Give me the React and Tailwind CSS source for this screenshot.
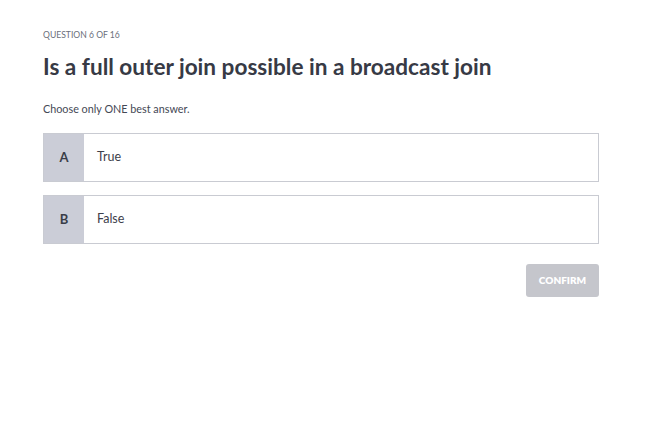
export default function App() {
  const opts = [
    ["A", "True"],
    ["B", "False"],
  ];
  return (
    <div className="w-[654px] h-[439px] bg-white" style={{ fontFamily: "Lato, 'Open Sans', sans-serif" }}>
      <div className="pl-[43px] pr-[55px] pt-[30px]">
        <div className="text-[8.6px] leading-[11px] text-[#6b6f7b] uppercase">Question 6 of 16</div>
        <h1 className="mt-[12px] text-[22.6px] leading-[28px] font-bold text-[#373a45]">Is a full outer join possible in a broadcast join</h1>
        <p className="mt-[21px] text-[10.8px] leading-[13px] text-[#444854]">Choose only ONE best answer.</p>
        <div className="mt-[18px] flex flex-col gap-[13px]">
          {opts.map(([l, t]) => (
            <div key={l} className="flex h-[49px] border border-[#c9cbd2]">
              <div className="w-[40px] bg-[#cbcdd7] flex items-center justify-center text-[13px] font-bold text-[#3a3d48]">{l}</div>
              <div className="flex-1 flex items-center pl-[13px] text-[12.5px] text-[#3d404b]">{t}</div>
            </div>
          ))}
        </div>
        <div className="mt-[20px] flex justify-end">
          <button className="w-[73px] h-[33px] rounded-[3px] bg-[#c5c6cc] text-white text-[10px] font-extrabold uppercase">Confirm</button>
        </div>
      </div>
    </div>
  );
}
